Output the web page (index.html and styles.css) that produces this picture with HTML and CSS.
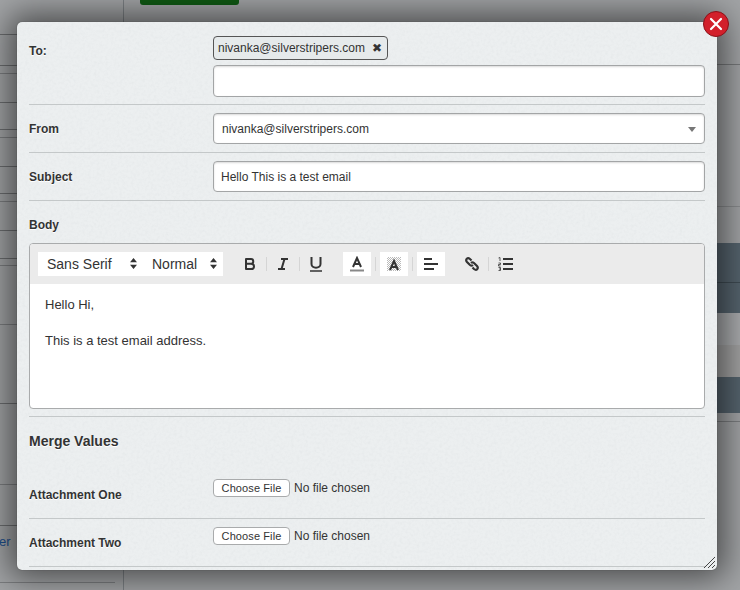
FILE: index.html
```html
<!DOCTYPE html>
<html lang="en">
<head>
    <meta charset="UTF-8">
    <title>Send email</title>
    <link rel="stylesheet" href="styles.css">
</head>
<body>
<div class="page">
    <div class="page-btn"></div>
    <div class="page-link">er</div>
</div>
<div class="modal">
    <svg class="grain" width="700" height="548">
        <filter id="paper">
            <feTurbulence type="fractalNoise" baseFrequency=".35" numOctaves="3"/>
            <feColorMatrix values="0 0 0 0 .55  0 0 0 0 .58  0 0 0 0 .6  .5 .5 0 0 -.42"/>
        </filter>
        <rect width="700" height="548" filter="url(#paper)"/>
    </svg>
    <a class="close">
        <svg width="14" height="14" viewBox="0 0 14 14"><path d="M2 2L12 12M12 2L2 12" stroke="#fff" stroke-width="2.2" stroke-linecap="round"/></svg>
    </a>
    <div class="row row-to">
        <label class="lbl">To:</label>
        <div class="field">
            <div class="tag">nivanka@silverstripers.com <span class="tag-x">&#10006;</span></div>
            <div class="input input-tall"></div>
        </div>
    </div>
    <div class="row">
        <label class="lbl">From</label>
        <div class="field">
            <div class="input select">nivanka@silverstripers.com<i class="caret"></i></div>
        </div>
    </div>
    <div class="row">
        <label class="lbl">Subject</label>
        <div class="field">
            <div class="input text">Hello This is a test email</div>
        </div>
    </div>
    <div class="body-row">
        <label class="lbl">Body</label>
        <div class="editor">
            <div class="toolbar">
                <div class="picker-group">
                    <span class="picker picker-font">Sans Serif<svg class="arrows" width="7" height="11" viewBox="0 0 7 11"><path d="M3.500 0L7 4.200H0ZM3.500 11L0 6.800H7Z" fill="#333"/></svg></span>
                    <span class="picker picker-size">Normal<svg class="arrows" width="7" height="11" viewBox="0 0 7 11"><path d="M3.500 0L7 4.200H0ZM3.500 11L0 6.800H7Z" fill="#333"/></svg></span>
                </div>
                <div class="tools">
                    <span class="tool"><svg width="14" height="14" viewBox="0 0 14 14"><path d="M3 2H8C11 2 11 6.800 8 6.800H3M8 6.800C12 6.800 12 12 8 12H3M3 1.200V12.800" fill="none" stroke="#333" stroke-width="2"/></svg></span>
                    <span class="sep"></span>
                    <span class="tool"><svg width="14" height="14" viewBox="0 0 14 14"><path d="M5 2H12M2 12H9M8.500 2L5.500 12" fill="none" stroke="#333" stroke-width="2"/></svg></span>
                    <span class="sep"></span>
                    <span class="tool"><svg width="14" height="16" viewBox="0 0 14 16"><path d="M2.500 1V8C2.500 13 11.500 13 11.500 8V1" fill="none" stroke="#333" stroke-width="2"/><path d="M1 15H13" stroke="#333" stroke-width="1.500"/></svg></span>
                </div>
                <span class="chip"><svg width="14" height="16" viewBox="0 0 14 16"><path d="M3 11L7 2L11 11M4.500 8H9.500" fill="none" stroke="#333" stroke-width="2"/><path d="M0 14.500H14" stroke="#888" stroke-width="2"/></svg></span>
                <span class="sep sep-tight"></span>
                <span class="chip chip-back"><svg width="14" height="14" viewBox="0 0 14 14"><path d="M3 13L7 4L11 13M4.500 10H9.500" fill="none" stroke="#333" stroke-width="2"/></svg></span>
                <span class="sep sep-tight"></span>
                <span class="chip"><svg width="14" height="12" viewBox="0 0 14 12"><path d="M0 1H8M0 6H14M0 11H10" stroke="#333" stroke-width="2"/></svg></span>
                <span class="tool tool-link"><svg width="14" height="14" viewBox="0 0 14 14"><path d="M6.500 3.500L5 2C2.500 0 0 2.500 2 5L5 8C6 8.800 7 8.800 8 8M7.500 10.500L9 12C11.500 14 14 11.500 12 9L9 6C8 5.200 7 5.200 6 6" fill="none" stroke="#333" stroke-width="2.200"/></svg></span>
                <span class="sep"></span>
                <span class="tool tool-list"><svg width="15" height="14" viewBox="0 0 15 14"><path d="M5 2H15M5 7H15M5 12H15" stroke="#333" stroke-width="2"/><path d="M0.500 1L2 .5V4M0.500 6H2.500V7.500H0.500V9H2.500M0.500 10.500H2.500V13.500H0.500M1 12H2.500" fill="none" stroke="#333" stroke-width=".8"/></svg></span>
            </div>
            <div class="editor-text">
                <p>Hello Hi,</p>
                <p class="gap">This is a test email address.</p>
            </div>
        </div>
    </div>
    <h3 class="merge">Merge Values</h3>
    <div class="row row-file row-first">
        <label class="lbl">Attachment One</label>
        <div class="file"><span class="file-btn">Choose File</span><span class="file-name">No file chosen</span></div>
    </div>
    <div class="row row-file">
        <label class="lbl">Attachment Two</label>
        <div class="file"><span class="file-btn">Choose File</span><span class="file-name">No file chosen</span></div>
    </div>
    <svg class="grip" width="13" height="13" viewBox="0 0 13 13"><path d="M1 12L12 1M5 12L12 5M9 12L12 9" stroke="#444" stroke-width="1"/></svg>
</div>
</body>
</html>
```

FILE: styles.css
```css
* {
    box-sizing: border-box;
    margin: 0;
    padding: 0;
}

body {
    width: 740px;
    height: 590px;
    overflow: hidden;
    background: #a2a4a6;
    font-family: "Liberation Sans", Arial, sans-serif;
    font-size: 12px;
    color: #333;
}

/* dimmed page behind the dialog: table rows on the left, dark bands on the right */
.page {
    position: absolute;
    inset: 0;
    background:
        linear-gradient(#7c8084, #7c8084) 123px 0 / 1px 590px no-repeat,
        linear-gradient(#6c6e70, #6c6e70) 0 34px / 123px 1px no-repeat,
        linear-gradient(#6c6e70, #6c6e70) 0 65px / 123px 1px no-repeat,
        linear-gradient(#7c7e80, #7c7e80) 0 73px / 123px 1px no-repeat,
        linear-gradient(#6c6e70, #6c6e70) 0 102px / 123px 1px no-repeat,
        linear-gradient(#6c6e70, #6c6e70) 0 129px / 123px 1px no-repeat,
        linear-gradient(#7c7e80, #7c7e80) 0 137px / 123px 1px no-repeat,
        linear-gradient(#6c6e70, #6c6e70) 0 166px / 123px 1px no-repeat,
        linear-gradient(#6c6e70, #6c6e70) 0 193px / 123px 1px no-repeat,
        linear-gradient(#7c7e80, #7c7e80) 0 201px / 123px 1px no-repeat,
        linear-gradient(#6c6e70, #6c6e70) 0 230px / 123px 1px no-repeat,
        linear-gradient(#6c6e70, #6c6e70) 0 258px / 123px 1px no-repeat,
        linear-gradient(#7c7e80, #7c7e80) 0 265px / 123px 1px no-repeat,
        linear-gradient(#7c7e80, #7c7e80) 0 324px / 123px 1px no-repeat,
        linear-gradient(#6c6e70, #6c6e70) 0 403px / 123px 1px no-repeat,
        linear-gradient(#7c7e80, #7c7e80) 0 484px / 123px 1px no-repeat,
        linear-gradient(#6c6e70, #6c6e70) 0 525px / 123px 1px no-repeat,
        linear-gradient(#7c7e80, #7c7e80) 0 582px / 115px 1px no-repeat,
        linear-gradient(#77797b, #77797b) 717px 64px / 23px 1px no-repeat,
        linear-gradient(#8a8c8e, #8a8c8e) 717px 206px / 23px 1px no-repeat,
        linear-gradient(#3f4b53, #3f4b53) 717px 282px / 23px 1px no-repeat,
        linear-gradient(#7c7e80, #7c7e80) 717px 421px / 23px 1px no-repeat,
        linear-gradient(#56646e, #56646e) 717px 243px / 23px 70px no-repeat,
        linear-gradient(#aaacae, #aaacae) 717px 313px / 23px 32px no-repeat,
        linear-gradient(#a2a2a2, #a2a2a2) 717px 345px / 23px 32px no-repeat,
        linear-gradient(#56646e, #56646e) 717px 377px / 23px 36px no-repeat;
}

.page-btn {
    width: 99px;
    height: 5px;
    margin-left: 140px;
    background: #0f5a13;
    border-radius: 0 0 3px 3px;
}

.page-link {
    position: absolute;
    left: -1px;
    top: 534px;
    font-size: 13px;
    color: #1d4f8c;
}

.modal {
    position: absolute;
    left: 17px;
    top: 22px;
    width: 700px;
    height: 548px;
    padding: 0 12px;
    background: #ecefF0;
    border-radius: 5px;
    box-shadow: 0 0 1px #333, 0 0 32px 8px rgba(0, 0, 0, .55);
    isolation: isolate;
}

.grain {
    position: absolute;
    left: 0;
    top: 0;
    z-index: -1;
    border-radius: 5px;
    opacity: .35;
}

.close {
    position: absolute;
    right: -12px;
    top: -11px;
    width: 26px;
    height: 26px;
    border-radius: 50%;
    background: #d2202b;
    border: 1px solid #8c1018;
    display: flex;
    align-items: center;
    justify-content: center;
}

.row {
    display: flex;
    padding: 8px 0;
    border-bottom: 1px solid #c4c8c9;
}

.row-to {
    padding: 14px 0 7px;
}

.lbl {
    display: block;
    width: 184px;
    height: 31px;
    flex: none;
    padding-top: 1px;
    font-weight: bold;
    line-height: 31px;
    color: #333;
    text-shadow: 0 1px 0 #fff;
}

.row-to .lbl {
    padding-top: 0;
    line-height: 30px;
}

.field {
    flex: 1;
}

.tag {
    width: 175px;
    height: 24px;
    margin-bottom: 5px;
    padding-left: 4px;
    border: 1px solid #555;
    border-radius: 4px;
    background: #e6eaeb;
    font-size: 12px;
    line-height: 22px;
    white-space: nowrap;
}

.tag-x {
    margin-left: 4px;
    font-size: 12px;
}

.input {
    height: 31px;
    border: 1px solid #a3a5a6;
    border-radius: 4px;
    background: #fff;
    box-shadow: inset 0 1px 2px rgba(0, 0, 0, .15);
    line-height: 31px;
    padding-left: 8px;
}

.input-tall {
    height: 32px;
}

.text {
    padding-left: 7px;
}

.select {
    position: relative;
}

.caret {
    position: absolute;
    right: 8px;
    top: 13px;
    border-left: 4px solid transparent;
    border-right: 4px solid transparent;
    border-top: 5px solid #777;
}

.body-row {
    padding: 8px 0 7px;
    border-bottom: 1px solid #c4c8c9;
}

.body-row .lbl {
    height: 34px;
    padding-top: 0;
    line-height: 33px;
}

.editor {
    height: 166px;
    border: 1px solid #a9abac;
    border-radius: 4px;
    background: #fff;
    overflow: hidden;
}

.toolbar {
    height: 40px;
    background: #ebebeb;
    display: flex;
    align-items: center;
    padding-left: 8px;
}

.picker-group {
    display: flex;
    height: 24px;
    width: 185px;
    background: #fff;
    align-items: center;
    font-size: 14px;
    color: #333;
}

.picker {
    position: relative;
    display: block;
    line-height: 20px;
}

.picker-font {
    width: 114px;
    padding-left: 9px;
}

.picker-size {
    width: 71px;
}

.arrows {
    position: absolute;
    top: 4px;
}

.picker-font .arrows {
    right: 15px;
}

.picker-size .arrows {
    right: 6px;
}

.tools {
    display: flex;
    align-items: center;
    margin: 0 20px;
}

.tool {
    display: flex;
    width: 14px;
    justify-content: center;
}

.tool-list {
    width: 15px;
}

.sep {
    width: 1px;
    height: 14px;
    margin: 0 9px;
    background: #d5d5d5;
}

.sep-tight {
    margin: 0 4px;
}

.chip {
    display: flex;
    width: 28px;
    height: 24px;
    background: #fff;
    align-items: center;
    justify-content: center;
}

.tool-link {
    margin-left: 20px;
}

.chip-back svg {
    background: repeating-conic-gradient(#bbb 0 25%, #fff 0 50%) 0 0 / 2px 2px;
}

.editor-text {
    padding: 12px 15px;
    font-size: 13px;
    line-height: 18px;
}

.gap {
    margin-top: 18px;
}

.merge {
    font-size: 14px;
    line-height: 16px;
    padding-top: 16px;
    text-shadow: 0 1px 0 #fff;
}

.row-file {
    align-items: flex-start;
    height: 48px;
}

.row-first {
    height: 70px;
    padding-top: 30px;
}

.row-file .lbl {
    height: 18px;
    padding-top: 0;
    line-height: 18px;
    margin-top: 7px;
}

.file {
    display: flex;
    align-items: center;
    height: 18px;
}

.file-btn {
    width: 77px;
    height: 18px;
    background: #fff;
    border: 1px solid #a9abac;
    border-radius: 4px;
    text-align: center;
    line-height: 16px;
    font-size: 11px;
    letter-spacing: .1px;
}

.file-name {
    margin-left: 4px;
}

.grip {
    position: absolute;
    right: 1px;
    bottom: 1px;
}
```
